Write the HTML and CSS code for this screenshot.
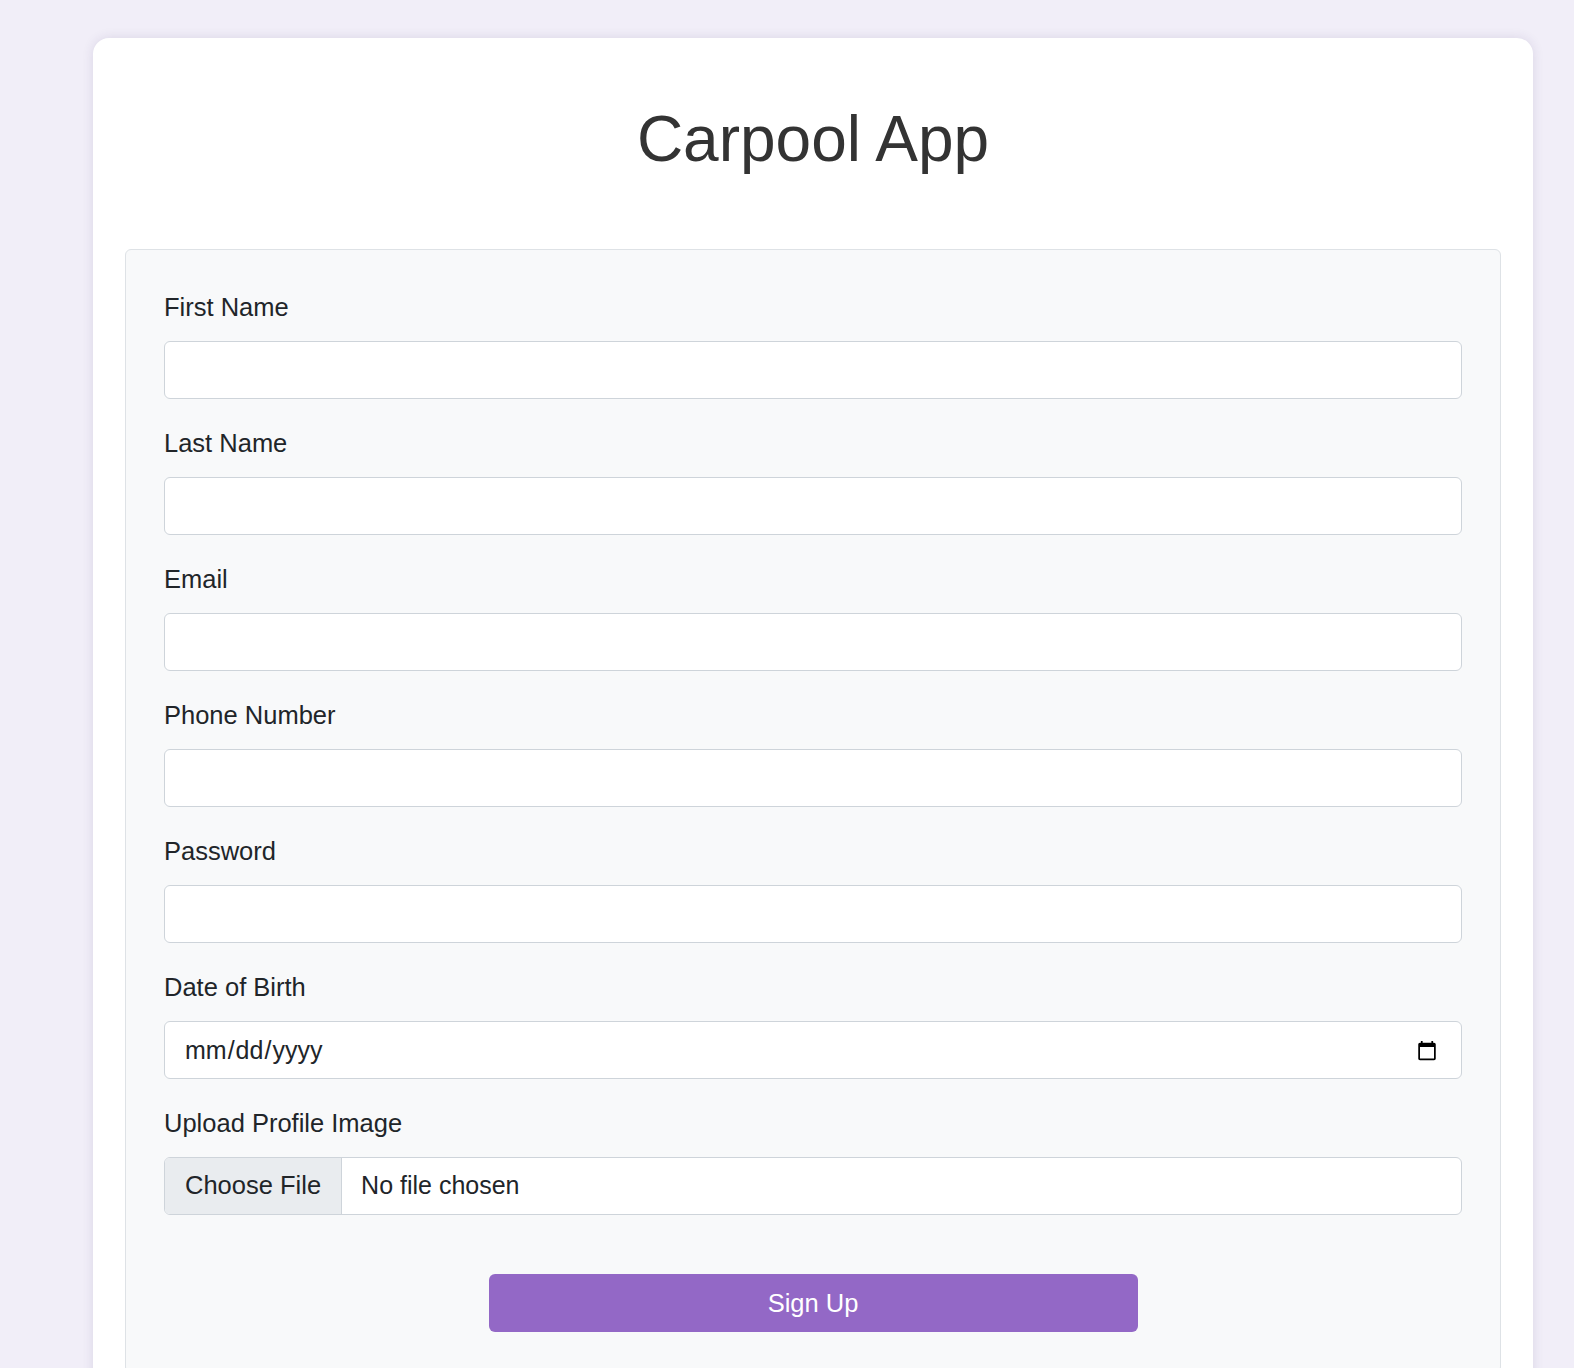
FILE: index.html
```html
<!DOCTYPE html>
<html lang="en">
<head>
<meta charset="utf-8">
<title>Carpool App</title>
<link rel="stylesheet" href="styles.css">
</head>
<body>
<div class="card">
  <h1 class="title">Carpool App</h1>
  <form class="signup">
    <div class="group">
      <label class="label" for="first">First Name</label>
      <input class="field" id="first" type="text">
    </div>
    <div class="group">
      <label class="label" for="last">Last Name</label>
      <input class="field" id="last" type="text">
    </div>
    <div class="group">
      <label class="label" for="email">Email</label>
      <input class="field" id="email" type="email">
    </div>
    <div class="group">
      <label class="label" for="phone">Phone Number</label>
      <input class="field" id="phone" type="tel">
    </div>
    <div class="group">
      <label class="label" for="pw">Password</label>
      <input class="field" id="pw" type="password">
    </div>
    <div class="group">
      <label class="label" for="dob">Date of Birth</label>
      <input class="field date" id="dob" type="date">
    </div>
    <div class="group">
      <label class="label" for="img">Upload Profile Image</label>
      <input class="field file" id="img" type="file">
    </div>
    <div class="actions">
      <button class="submit" type="button">Sign Up</button>
    </div>
  </form>
</div>
</body>
</html>
```

FILE: styles.css
```css
* { box-sizing: border-box; }
html, body { margin: 0; padding: 0; }
body {
  background: #f1eef8;
  font-family: "Liberation Sans", Arial, Helvetica, sans-serif;
  color: #212529;
  overflow: hidden;
}
.card {
  margin: 38px 0 0 93px;
  width: 1440px;
  background: #fff;
  border-radius: 16px;
  box-shadow: 0 0 12px rgba(60, 40, 100, 0.12);
  padding: 32px 32px 40px;
}
.title {
  margin: 32px 0 72px;
  font-size: 64px;
  line-height: 75px;
  font-weight: 400;
  text-align: center;
  color: #333;
}
.signup {
  background: #f8f9fa;
  border: 1px solid #dee2e6;
  border-radius: 6px;
  padding: 38px 38px 40px;
}
.group {
  margin-bottom: 25px;
}
.label {
  display: block;
  font-size: 25.5px;
  line-height: 38px;
  margin-bottom: 15px;
}
.field {
  display: block;
  width: 100%;
  height: 58px;
  padding: 9px 19px;
  font-family: inherit;
  font-size: 25px;
  line-height: 37.5px;
  color: #212529;
  background: #fff;
  border: 1px solid #ced4da;
  border-radius: 6px;
  outline: none;
}
.date {
  padding-top: 11px;
}
.date::-webkit-calendar-picker-indicator {
  width: 22px;
  height: 22px;
  margin-right: 4px;
  padding: 0;
}
.file {
  overflow: hidden;
  padding: 9px 19px;
}
.file::file-selector-button {
  font-family: inherit;
  font-size: 25.5px;
  line-height: 37.5px;
  color: #212529;
  background: #e9ecef;
  padding: 9px 20px 9px 20px;
  margin: -9px 19px -9px -19px;
  border: 0;
  border-right: 1px solid #ced4da;
  border-radius: 0;
}
.actions {
  display: flex;
  justify-content: center;
  padding-top: 34px;
}
.submit {
  width: 50%;
  height: 58px;
  background: #9368c6;
  color: #fff;
  border: 0;
  border-radius: 6px;
  font-family: inherit;
  font-size: 25.5px;
}
```
